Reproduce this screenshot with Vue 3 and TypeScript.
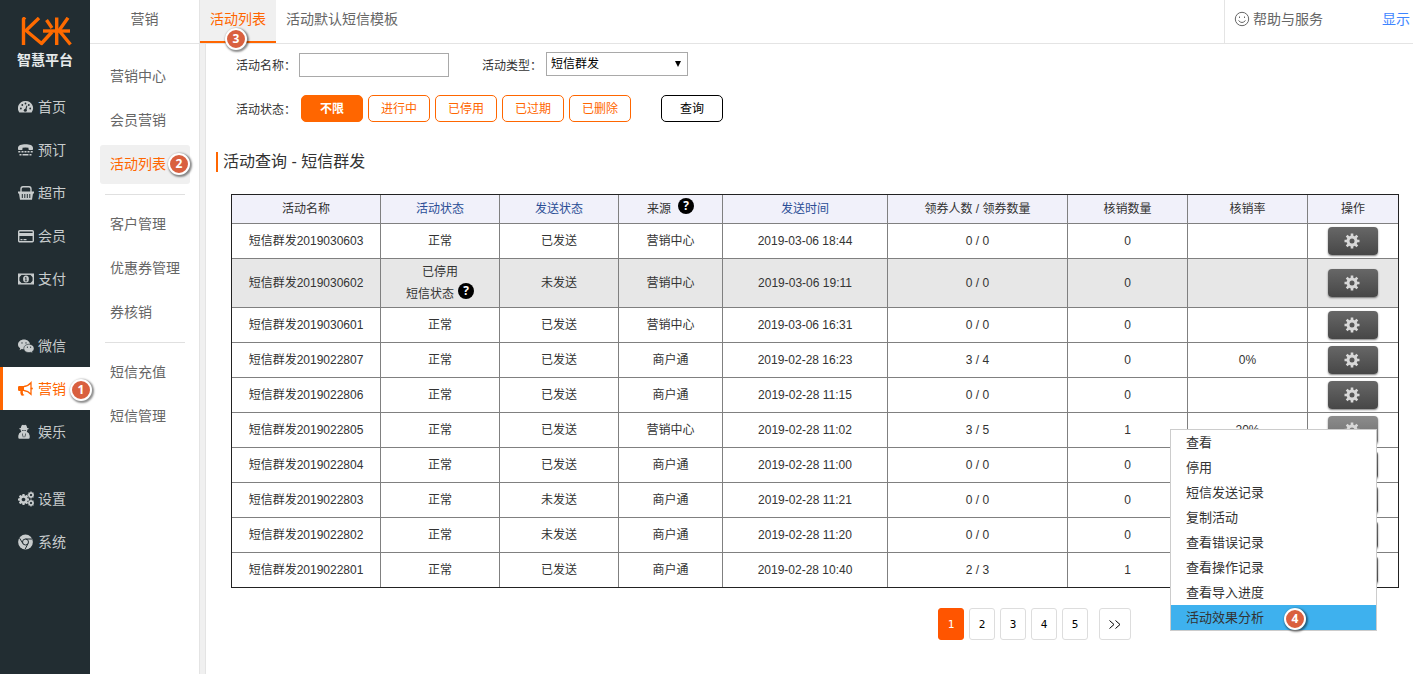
<script setup lang="ts">
import { ref } from 'vue'

interface NavItem {
  label: string
  icon: string
  active?: boolean
}

interface Row {
  name: string
  status: string
  note?: string
  sent: string
  source: string
  time: string
  claimed: string
  used: string
  rate: string
}

const mainNav: NavItem[][] = [
  [
    { label: '首页', icon: 'dash' },
    { label: '预订', icon: 'tty' },
    { label: '超市', icon: 'basket' },
    { label: '会员', icon: 'card' },
    { label: '支付', icon: 'money' },
  ],
  [
    { label: '微信', icon: 'wechat' },
    { label: '营销', icon: 'horn', active: true },
    { label: '娱乐', icon: 'agent' },
  ],
  [
    { label: '设置', icon: 'cogs' },
    { label: '系统', icon: 'chrome' },
  ],
]

const subNav: string[][] = [
  ['营销中心', '会员营销', '活动列表'],
  ['客户管理', '优惠券管理', '券核销'],
  ['短信充值', '短信管理'],
]

const states = ['不限', '进行中', '已停用', '已过期', '已删除']
const state = ref('不限')
const keyword = ref('')
const kind = ref('短信群发')

const rows: Row[] = [
  { name: '短信群发2019030603', status: '正常', sent: '已发送', source: '营销中心', time: '2019-03-06 18:44', claimed: '0 / 0', used: '0', rate: '' },
  { name: '短信群发2019030602', status: '已停用', note: '短信状态', sent: '未发送', source: '营销中心', time: '2019-03-06 19:11', claimed: '0 / 0', used: '0', rate: '' },
  { name: '短信群发2019030601', status: '正常', sent: '已发送', source: '营销中心', time: '2019-03-06 16:31', claimed: '0 / 0', used: '0', rate: '' },
  { name: '短信群发2019022807', status: '正常', sent: '已发送', source: '商户通', time: '2019-02-28 16:23', claimed: '3 / 4', used: '0', rate: '0%' },
  { name: '短信群发2019022806', status: '正常', sent: '已发送', source: '商户通', time: '2019-02-28 11:15', claimed: '0 / 0', used: '0', rate: '' },
  { name: '短信群发2019022805', status: '正常', sent: '已发送', source: '营销中心', time: '2019-02-28 11:02', claimed: '3 / 5', used: '1', rate: '20%' },
  { name: '短信群发2019022804', status: '正常', sent: '已发送', source: '商户通', time: '2019-02-28 11:00', claimed: '0 / 0', used: '0', rate: '' },
  { name: '短信群发2019022803', status: '正常', sent: '未发送', source: '商户通', time: '2019-02-28 11:21', claimed: '0 / 0', used: '0', rate: '' },
  { name: '短信群发2019022802', status: '正常', sent: '未发送', source: '商户通', time: '2019-02-28 11:20', claimed: '0 / 0', used: '0', rate: '' },
  { name: '短信群发2019022801', status: '正常', sent: '已发送', source: '商户通', time: '2019-02-28 10:40', claimed: '2 / 3', used: '1', rate: '' },
]

const openRow = ref(5)
const menu = ['查看', '停用', '短信发送记录', '复制活动', '查看错误记录', '查看操作记录', '查看导入进度', '活动效果分析']
const page = ref(1)

const cog =
  'M1152 896q0-106-75-181t-181-75-181 75-75 181 75 181 181 75 181-75 75-181zm512-109v222q0 12-8 23t-20 13l-185 28q-19 54-39 91 35 50 107 138 10 12 10 25t-9 23q-27 37-99 108t-94 71q-12 0-26-9l-138-108q-44 23-91 38-16 136-29 186-7 28-36 28h-222q-14 0-24.5-8.5t-11.5-21.5l-28-184q-49-16-90-37l-141 107q-10 9-25 9-14 0-25-11-126-114-165-168-7-10-7-23 0-12 8-23 15-21 51-66.5t54-70.5q-27-50-41-99l-183-27q-13-2-21-12.5t-8-23.5v-222q0-12 8-23t19-13l186-28q14-46 39-92-40-57-107-138-10-12-10-24 0-10 9-23 26-36 98.5-107.5t94.5-71.5q13 0 26 10l138 107q44-23 91-38 16-136 29-186 7-28 36-28h222q14 0 24.5 8.5t11.5 21.5l28 184q49 16 90 37l142-107q9-9 24-9 13 0 25 10 129 119 165 170 7 8 7 22 0 12-8 23-15 21-51 66.5t-54 70.5q26 50 41 98l183 28q13 2 21 12.5t8 23.5z'
const teeth = [0, 45, 90, 135]
</script>

<template>
  <div class="app">
    <aside class="sidebar">
      <div class="brand">
        <svg class="logo" width="54" height="29" viewBox="-1 0 54 29" fill="none" stroke="#ff6a00" stroke-width="3.400" stroke-linejoin="round" aria-hidden="true">
          <path d="M4.500 28V2L6 .3" />
          <path d="M20 1L7 13.500l15.500 13L33 15" />
          <path d="M24 14h27" />
          <path d="M37.700 .5V28" />
          <path d="M27.500 3l5.500 8" />
          <path d="M49 .8L40 13.500l11.500 14" />
        </svg>
        <span class="brand-name">智慧平台</span>
      </div>
      <nav>
        <ul v-for="(group, g) in mainNav" :key="g" class="nav-group">
          <li v-for="item in group" :key="item.label">
            <a href="#" class="nav-link" :class="{ active: item.active }">
              <svg class="nav-icon" width="16" height="16" viewBox="0 0 16 16" fill="currentColor" aria-hidden="true">
                <g v-if="item.icon === 'dash'">
                  <path d="M7.500 2A7.200 7.200 0 0 0 1.400 13.500h12.200A7.200 7.200 0 0 0 7.500 2z" />
                  <g class="cut">
                    <circle cx="2.900" cy="9.500" r=".9" />
                    <circle cx="4.300" cy="6" r=".9" />
                    <circle cx="7.500" cy="4.500" r=".9" />
                    <circle cx="10.800" cy="6" r=".9" />
                    <circle cx="12.200" cy="9.500" r=".9" />
                    <circle cx="7.300" cy="11.300" r="1.500" />
                    <path d="M6.900 11L8.500 6.500l.9.3L8.200 11.500z" />
                  </g>
                </g>
                <g v-else-if="item.icon === 'tty'">
                  <path d="M0 6C0 3.200 3.500 2.200 7.500 2.200s7.500 1 7.500 3.800v1.300q0 .7-.7.700h-3.100q-.7 0-.7-.7V5.800q-3-.8-6 0v1.500q0 .7-.7.700H.7Q0 8 0 7.300z" />
                  <path d="M.3 9h2v1.600h-2zM3.500 9h2v1.600h-2zM6.500 9h2v1.600h-2zM9.500 9h2v1.600h-2zM12.700 9h2v1.600h-2zM1.500 12h2v1.600h-2zM4.500 12h6v1.600h-6zM11.500 12h2v1.600h-2z" />
                </g>
                <g v-else-if="item.icon === 'basket'">
                  <path d="M3 7V4q0-2.300 2-2.300h6q2 0 2 2.300v3" fill="none" stroke="currentColor" stroke-width="1.400" />
                  <path d="M0 6.500h16v2h-1l-1 6.200H2L1 8.500H0z" />
                  <path class="cut" d="M3.800 9h1v4h-1zM6.300 9h1v4h-1zM8.800 9h1v4h-1zM11.300 9h1v4h-1z" />
                </g>
                <g v-else-if="item.icon === 'card'">
                  <rect x=".7" y="2.700" width="14.600" height="11" rx="1" fill="none" stroke="currentColor" stroke-width="1.400" />
                  <path d="M1 5h14v3H1zM2.500 11h2v1.200h-2zM5.500 11h3v1.200h-3z" />
                </g>
                <g v-else-if="item.icon === 'money'">
                  <rect x=".7" y="3.200" width="14.600" height="9.600" fill="none" stroke="currentColor" stroke-width="1.400" />
                  <path d="M1 3.500h3L1 6.500zM15 3.500h-3l3 3zM1 12.500h3L1 9.500zM15 12.500h-3l3-3z" />
                  <ellipse cx="8" cy="8" rx="2.900" ry="3.500" />
                  <path class="cut" d="M7 6.200h1.400v3.300h.7v.8H6.800v-.8h.7V7.200H6.800z" />
                </g>
                <g v-else-if="item.icon === 'wechat'">
                  <path d="M6 1.500C2.700 1.500 0 3.700 0 6.400c0 1.600.9 2.900 2.200 3.800l-.6 2 2.200-1.200c.7.200 1.400.3 2.200.3 3.200 0 6-2.200 6-4.900S9.200 1.500 6 1.500z" />
                  <path class="gap" d="M11 6.200c-3 0-5.200 1.900-5.200 4.200s2.200 4.200 5.200 4.200c.6 0 1.200-.1 1.800-.3l1.800 1-.5-1.600c1.200-.8 2-1.900 2-3.300 0-2.300-2.200-4.200-5.100-4.200z" />
                  <g class="cut">
                    <circle cx="4" cy="4.900" r=".7" />
                    <circle cx="8" cy="4.900" r=".7" />
                    <circle cx="9.400" cy="9.200" r=".6" />
                    <circle cx="12.600" cy="9.200" r=".6" />
                  </g>
                </g>
                <g v-else-if="item.icon === 'horn'">
                  <path d="M0 6.200Q0 5 1.200 5H6v5h-1c-.7 1 .3 2 0 2.700.4.600.9.900 1.500 1.300-.8.900-2.700.9-3.400.3-.4-1.300-1.200-2.600-.6-4.300H1.200Q0 10 0 8.800z" />
                  <path d="M6 5.500q4-.3 7-3.700v11.400q-3-3.200-7-3.700" fill="none" stroke="currentColor" stroke-width="1.300" />
                  <circle cx="13.800" cy="7.500" r="1.100" />
                </g>
                <g v-else-if="item.icon === 'agent'">
                  <path d="M3.800 1.200q1.200-1 2.200 0 1.200-1 2.200 0 .7 1.200 1 2.900 1.500.2 1.700.7-.5.600-1.600.8.200 1.300-.6 2.200 2.700.8 3 4v1.700q0 1.200-1.200 1.200h-9Q.3 14.700.3 13.500v-1.700q.3-3.200 3-4Q2.500 6.900 2.700 5.600q-1.100-.2-1.600-.8.200-.5 1.700-.7.300-1.700 1-2.900z" />
                  <path class="cut" d="M3.800 5.900h1.900v.9H4.200zM6.300 5.900h1.900l-.4.9H6.300zM4.600 9.500l1 3.700h-.7L4 9.500zM7.400 9.500l-1 3.700h.7L8 9.500z" />
                </g>
                <g v-else-if="item.icon === 'cogs'">
                  <svg x="-1" y="2" width="13" height="13" viewBox="0 0 1792 1792"><path :d="cog" /></svg>
                  <svg x="9" y="0" width="8" height="8" viewBox="0 0 1792 1792"><path :d="cog" /></svg>
                  <svg x="9" y="8" width="8" height="8" viewBox="0 0 1792 1792"><path :d="cog" /></svg>
                </g>
                <g v-else>
                  <circle cx="7.500" cy="8" r="7.400" />
                  <circle cx="7.500" cy="8" r="3" fill="none" class="ring" />
                  <path class="line" d="M7.500 5H14M4.900 9.500L1.600 4.200M10 9.600L7.200 15" />
                </g>
              </svg>
              <span class="nav-text">{{ item.label }}</span>
              <span v-if="item.active" class="badge on-nav">1</span>
            </a>
          </li>
        </ul>
      </nav>
    </aside>

    <div class="workspace">
      <header class="topbar">
        <div class="section-name">营销</div>
        <nav class="tabs">
          <a href="#" class="tab active">活动列表<span class="badge on-tab">3</span></a>
          <a href="#" class="tab">活动默认短信模板</a>
        </nav>
        <div class="top-right">
          <a href="#" class="help-link">
            <svg width="16" height="16" viewBox="0 0 16 16" fill="none" stroke="currentColor" aria-hidden="true">
              <circle cx="8" cy="8" r="6.700" />
              <path d="M4.500 9.500q3.500 4 7 0" />
              <path d="M5.500 5.500v1.500M10.500 5.500v1.500" />
            </svg>
            帮助与服务
          </a>
          <a href="#" class="show-link">显示</a>
        </div>
      </header>

      <div class="body">
        <nav class="subnav">
          <ul v-for="(group, g) in subNav" :key="g" class="sub-group">
            <li v-for="label in group" :key="label">
              <a href="#" class="sub-link" :class="{ active: label === '活动列表' }">
                {{ label }}<span v-if="label === '活动列表'" class="badge on-sub">2</span>
              </a>
            </li>
          </ul>
        </nav>
        <div class="gutter"></div>

        <main class="content">
          <form class="filters" @submit.prevent>
            <div class="filter-row">
              <label class="caption" for="keyword">活动名称：</label>
              <input id="keyword" v-model="keyword" class="text-input" type="text" />
              <label class="caption second" for="kind">活动类型：</label>
              <span class="select-wrap">
                <select id="kind" v-model="kind" class="select">
                  <option>短信群发</option>
                </select>
                <svg class="caret" width="6" height="6" viewBox="0 0 6 6" aria-hidden="true"><path d="M0 0h6L3 6z" /></svg>
              </span>
            </div>
            <div class="filter-row states" role="group" aria-label="活动状态">
              <span class="caption">活动状态：</span>
              <div class="pills">
                <button v-for="s in states" :key="s" type="button" class="pill" :class="{ on: s === state }" @click="state = s">{{ s }}</button>
              </div>
              <button type="submit" class="pill query">查询</button>
            </div>
          </form>

          <h1 class="title">活动查询 - 短信群发</h1>

          <table class="grid">
            <colgroup>
              <col class="c-name" />
              <col class="c-state" />
              <col class="c-state" />
              <col class="c-source" />
              <col class="c-time" />
              <col class="c-claim" />
              <col class="c-rate" />
              <col class="c-rate" />
              <col class="c-action" />
            </colgroup>
            <thead>
              <tr>
                <th>活动名称</th>
                <th><a href="#">活动状态</a></th>
                <th><a href="#">发送状态</a></th>
                <th><span class="with-help wide">来源<span class="help">?</span></span></th>
                <th><a href="#">发送时间</a></th>
                <th>领券人数 / 领券数量</th>
                <th>核销数量</th>
                <th>核销率</th>
                <th>操作</th>
              </tr>
            </thead>
            <tbody>
              <tr v-for="(row, i) in rows" :key="row.name" :class="{ stopped: row.note }">
                <td>{{ row.name }}</td>
                <td>
                  {{ row.status }}
                  <div v-if="row.note" class="with-help">{{ row.note }}<span class="help">?</span></div>
                </td>
                <td>{{ row.sent }}</td>
                <td>{{ row.source }}</td>
                <td>{{ row.time }}</td>
                <td>{{ row.claimed }}</td>
                <td>{{ row.used }}</td>
                <td>{{ row.rate }}</td>
                <td>
                  <div class="action">
                    <button type="button" class="gear" :class="{ open: i === openRow }" aria-label="操作" @click="openRow = i">
                      <svg width="16" height="16" viewBox="-8 -8 16 16" fill="none" stroke="#d8d8d8" aria-hidden="true">
                        <circle r="4" stroke-width="3" />
                        <path v-for="t in teeth" :key="t" d="M0-7.500V-5M0 5v2.500" stroke-width="2.600" :transform="`rotate(${t})`" />
                      </svg>
                    </button>
                    <ul v-if="i === openRow" class="menu">
                      <li v-for="(entry, m) in menu" :key="entry">
                        <button type="button" class="menu-item" :class="{ hot: m === menu.length - 1 }">
                          {{ entry }}<span v-if="m === menu.length - 1" class="badge in-menu">4</span>
                        </button>
                      </li>
                    </ul>
                  </div>
                </td>
              </tr>
            </tbody>
          </table>

          <nav class="pager" aria-label="分页">
            <button v-for="n in 5" :key="n" type="button" class="page" :class="{ on: n === page }" @click="page = n">{{ n }}</button>
            <button type="button" class="page next" aria-label="下一页">
              <svg width="12" height="9" viewBox="0 0 12 9" fill="none" stroke="#000" aria-hidden="true">
                <path d="M.5.5l4.500 4-4.500 4M6.500.5l4.500 4-4.500 4" />
              </svg>
            </button>
          </nav>
        </main>
      </div>
    </div>
  </div>
</template>

<style>
body {
  margin: 0;
  background: #fff;
}
</style>

<style scoped>
.app {
  display: flex;
  min-height: 100vh;
  font-family: "Liberation Sans", "Noto Sans CJK SC", sans-serif;
  font-size: 12px;
  color: #333;
}
.app * {
  box-sizing: border-box;
}
ul {
  list-style: none;
  margin: 0;
  padding: 0;
}
a {
  color: inherit;
  text-decoration: none;
}
button,
input,
select {
  font-family: inherit;
}

.sidebar {
  flex: none;
  width: 90px;
  background: #222d32;
}
.brand {
  height: 85px;
  padding-top: 17px;
  display: flex;
  flex-direction: column;
  align-items: center;
}
.brand-name {
  margin-top: 4px;
  font-size: 14px;
  line-height: 20px;
  font-weight: 700;
  color: #e6eaeb;
}
.nav-group {
  margin-bottom: 24px;
}
.nav-link {
  position: relative;
  display: flex;
  align-items: center;
  gap: 4px;
  height: 43px;
  padding-left: 18px;
  font-size: 14px;
  color: #c8cccd;
}
.nav-link.active {
  background: #fff;
  color: #ff6600;
  border-left: 3px solid #ff6600;
  padding-left: 15px;
}
.nav-text {
  padding-bottom: 2px;
}
.nav-icon {
  flex: none;
}
.cut {
  fill: #222d32;
}
.gap {
  stroke: #222d32;
  stroke-width: 0.6px;
}
.ring,
.line {
  stroke: #222d32;
  stroke-width: 1px;
}

.badge {
  position: absolute;
  width: 22px;
  height: 22px;
  border: 2px solid #fff;
  border-radius: 50%;
  background: #d9603f;
  box-shadow: 1px 1px 2px 1px rgba(0, 0, 0, 0.45);
  color: #fff;
  font: 700 12px/18px "Open Sans", sans-serif;
  text-align: center;
  z-index: 2;
}
.on-nav {
  top: 12px;
  right: -2px;
}
.on-sub {
  top: 8px;
  right: 0;
}
.on-tab {
  top: 28px;
  left: 25px;
}
.in-menu {
  top: 3px;
  left: 113px;
}

.workspace {
  flex: 1;
  min-width: 0;
  display: flex;
  flex-direction: column;
}
.topbar {
  display: flex;
  height: 44px;
  border-bottom: 1px solid #e4e4e4;
  font-size: 14px;
  line-height: 38px;
  color: #666;
}
.section-name {
  width: 110px;
  border-right: 1px solid #e4e4e4;
  text-align: center;
}
.tabs {
  flex: 1;
  display: flex;
}
.tab {
  position: relative;
  height: 43px;
  padding: 0 10px;
}
.tab.active {
  background: #f0f0f0;
  color: #ff6600;
  border-bottom: 2px solid #ff6600;
}
.top-right {
  width: 189px;
  padding: 0 3px 0 9px;
  border-left: 1px solid #e4e4e4;
  display: flex;
  justify-content: space-between;
}
.help-link {
  display: flex;
  align-items: center;
  gap: 3px;
  height: 38px;
}
.show-link {
  color: #3d85ff;
}

.body {
  flex: 1;
  display: flex;
}
.subnav {
  flex: none;
  width: 110px;
  padding: 13px 9px 0 10px;
  border-right: 1px solid #e4e4e4;
}
.gutter {
  flex: none;
  width: 6px;
  background: #f0f0f0;
  border-right: 1px solid #e4e4e4;
}
.sub-group {
  display: flex;
  flex-direction: column;
  gap: 5px;
}
.sub-group + .sub-group::before {
  content: "";
  margin: 10px 5px 5px;
  border-top: 1px solid #e0e0e0;
}
.sub-link {
  position: relative;
  display: block;
  height: 39px;
  padding-left: 10px;
  border-radius: 3px;
  font-size: 14px;
  line-height: 38px;
  color: #666;
}
.sub-link.active {
  background: #f0f0f0;
  color: #ff6600;
}

.content {
  flex: 1;
  min-width: 0;
  padding: 8px 14px 30px 25px;
}
.filters {
  padding-left: 5px;
}
.filter-row {
  display: flex;
  align-items: center;
  height: 25px;
}
.filter-row.states {
  height: 27px;
  margin-top: 18px;
}
.caption {
  width: 63px;
  flex: none;
}
.caption.second {
  width: 64px;
  margin-left: 33px;
}
.text-input {
  width: 150px;
  height: 24px;
  padding: 0 4px;
  border: 1px solid #a9a9a9;
  background: #fff;
  font-size: 12px;
}
.select-wrap {
  position: relative;
  display: flex;
  align-self: flex-start;
}
.select {
  appearance: none;
  width: 142px;
  height: 24px;
  padding: 0 4px;
  border: 1px solid #a9a9a9;
  border-radius: 0;
  background: #fff;
  color: #000;
  font-size: 12px;
}
.caret {
  position: absolute;
  top: 9px;
  right: 7px;
  pointer-events: none;
}
.states .caption {
  width: 65px;
}
.pills {
  display: flex;
  gap: 5px;
}
.pill {
  width: 62px;
  height: 27px;
  padding: 0 0 3px;
  border: 1px solid #ff6600;
  border-radius: 5px;
  background: #fff;
  color: #ff6600;
  font-size: 12px;
}
.pill.on {
  background: #ff6600;
  color: #fff;
  font-weight: 700;
}
.pill.query {
  margin-left: 30px;
  border-color: #000;
  color: #000;
}
.title {
  margin: 30px 0 22px -15px;
  padding-left: 5px;
  border-left: 2px solid #ff6600;
  font-size: 16px;
  font-weight: 400;
  line-height: 20px;
}

.grid {
  width: 100%;
  table-layout: fixed;
  border: 1px solid #222;
  border-collapse: separate;
  border-spacing: 0;
  text-align: center;
}
.c-name { width: 149px; }
.c-state { width: 119px; }
.c-source { width: 104px; }
.c-time { width: 165px; }
.c-claim { width: 180px; }
.c-rate { width: 120px; }
.c-action { width: 90px; }
th,
td {
  height: 35px;
  padding: 0;
  border-right: 1px solid #808080;
  border-bottom: 1px solid #808080;
  font-weight: 400;
  line-height: 22px;
  vertical-align: middle;
}
th {
  height: 29px;
  background: #f1f1fa;
}
th a {
  color: #2b4e96;
}
th:last-child,
td:last-child {
  border-right: 0;
}
tbody tr:last-child td {
  height: 34px;
  border-bottom: 0;
}
.stopped td {
  height: 49px;
  background: #e7e7e7;
}
.with-help {
  display: flex;
  justify-content: center;
  gap: 4px;
}
.with-help.wide {
  gap: 7px;
}
.help {
  width: 16px;
  height: 16px;
  border-radius: 50%;
  background: #000;
  color: #fff;
  font: 700 12px/16px "Open Sans", sans-serif;
}
.action {
  position: relative;
  width: 50px;
  height: 28px;
  margin: 0 auto;
}
.gear {
  display: flex;
  align-items: center;
  justify-content: center;
  width: 50px;
  height: 28px;
  padding: 0 2px 0 0;
  border: 0;
  border-radius: 4px;
  background: linear-gradient(#676767, #474747);
  box-shadow: 0 1px 2px rgba(0, 0, 0, 0.5);
}
.gear.open {
  background: linear-gradient(#8c8c8c, #6c6c6c);
}
.menu {
  position: absolute;
  top: 13px;
  right: 1px;
  width: 207px;
  border: 1px solid #ccc;
  background: #fff;
  z-index: 1;
}
.menu-item {
  position: relative;
  display: block;
  width: 100%;
  height: 25px;
  padding: 0 0 0 15px;
  border: 0;
  background: none;
  color: #333;
  font-size: 13px;
  line-height: 25px;
  text-align: left;
}
.menu-item.hot {
  background: #3eb1ee;
}

.pager {
  display: flex;
  justify-content: flex-end;
  gap: 5px;
  margin-top: 20px;
  padding-right: 268px;
}
.page {
  display: flex;
  align-items: center;
  justify-content: center;
  width: 26px;
  height: 32px;
  padding: 0;
  border: 1px solid #ddd;
  border-radius: 3px;
  background: #fff;
  color: #000;
  font: 11px "DejaVu Sans Mono", monospace;
}
.page.on {
  border-color: #ff5500;
  background: #ff5500;
  color: #fff;
}
.page.next {
  width: 32px;
  margin-left: 6px;
}
</style>
